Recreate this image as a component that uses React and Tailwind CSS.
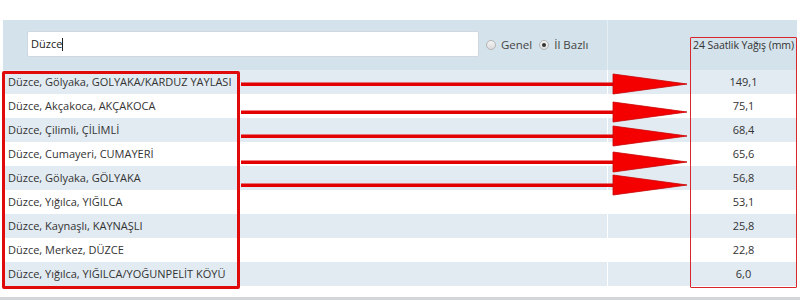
import React from "react";

const rows = [
  { name: "Düzce, Gölyaka, GOLYAKA/KARDUZ YAYLASI", value: "149,1" },
  { name: "Düzce, Akçakoca, AKÇAKOCA", value: "75,1" },
  { name: "Düzce, Çilimli, ÇİLİMLİ", value: "68,4" },
  { name: "Düzce, Cumayeri, CUMAYERİ", value: "65,6" },
  { name: "Düzce, Gölyaka, GÖLYAKA", value: "56,8" },
  { name: "Düzce, Yığılca, YIĞILCA", value: "53,1" },
  { name: "Düzce, Kaynaşlı, KAYNAŞLI", value: "25,8" },
  { name: "Düzce, Merkez, DÜZCE", value: "22,8" },
  { name: "Düzce, Yığılca, YIĞILCA/YOĞUNPELİT KÖYÜ", value: "6,0" },
];

// y centres of the annotation arrows
const arrows = [84, 112, 136, 162, 185];

const Radio = ({ checked, label }) => (
  <label className="flex items-center gap-[5px]">
    <span className="w-[10px] h-[10px] rounded-full border border-[#b5b5b5] bg-gradient-to-b from-[#f4f4f4] to-[#dcdcdc] flex items-center justify-center">
      {checked && <span className="w-[4px] h-[4px] rounded-full bg-[#333]" />}
    </span>
    <span>{label}</span>
  </label>
);

export default function App() {
  return (
    <div className="relative w-[800px] h-[300px] overflow-hidden bg-white font-['Open_Sans',sans-serif] text-[11px] text-[#333]">
      <div className="pt-5 px-[3px]">
        {/* Header */}
        <div className="flex h-[50px] bg-[#d4e2eb]">
          <div className="w-[604px] flex items-center pl-6 gap-[7px] text-[11.5px] text-[#444]">
            <div className="w-[452px] h-[26px] mt-[-2px] bg-white border border-[#cfd8de] rounded-[2px] flex items-center pl-[3px] text-[11px] text-[#222]">
              Düzce<span className="w-px h-[13px] bg-[#222]" />
            </div>
            <Radio label="Genel" />
            <Radio checked label="İl Bazlı" />
          </div>
          <div className="w-px bg-[#e4edf2]" />
          <div className="w-[82px]" />
          <div className="flex-1 flex justify-center pt-[18px] text-[10.5px] tracking-[-0.1px] text-[#333] whitespace-nowrap">
            24 Saatlik Yağış (mm)
          </div>
        </div>

        {/* Rows */}
        {rows.map((r, i) => (
          <div
            key={r.name}
            className={`flex h-[24px] items-center ${i % 2 === 0 ? "bg-[#e2ebf2]" : "bg-white"}`}
          >
            <div className="w-[604px] pl-[5px] whitespace-nowrap">{r.name}</div>
            <div className="w-px self-stretch bg-white" />
            <div className="w-[82px]" />
            <div className="flex-1 text-center">{r.value}</div>
          </div>
        ))}
      </div>

      <div className="mt-[11px] h-[4px] bg-[#d3d6d8]" />

      {/* Annotations */}
      <div className="absolute left-[2px] top-[71px] w-[238px] h-[218px] border-[3px] border-[#e10a0a] rounded-[2px]" />
      <div className="absolute left-[690px] top-[37px] w-[107px] h-[251px] border-[1.5px] border-[#d8262b] rounded-[1px]" />
      <svg className="absolute left-0 top-0" width="800" height="300">
        {arrows.map((y) => (
          <g key={y}>
            <rect x="241" y={y - 1.5} width="374" height="3.5" fill="#e30000" />
            <polygon
              points={`613,${y - 10} 687,${y} 613,${y + 10}`}
              fill="#f50000"
              stroke="#c80000"
              strokeWidth="0.8"
            />
          </g>
        ))}
      </svg>
    </div>
  );
}
